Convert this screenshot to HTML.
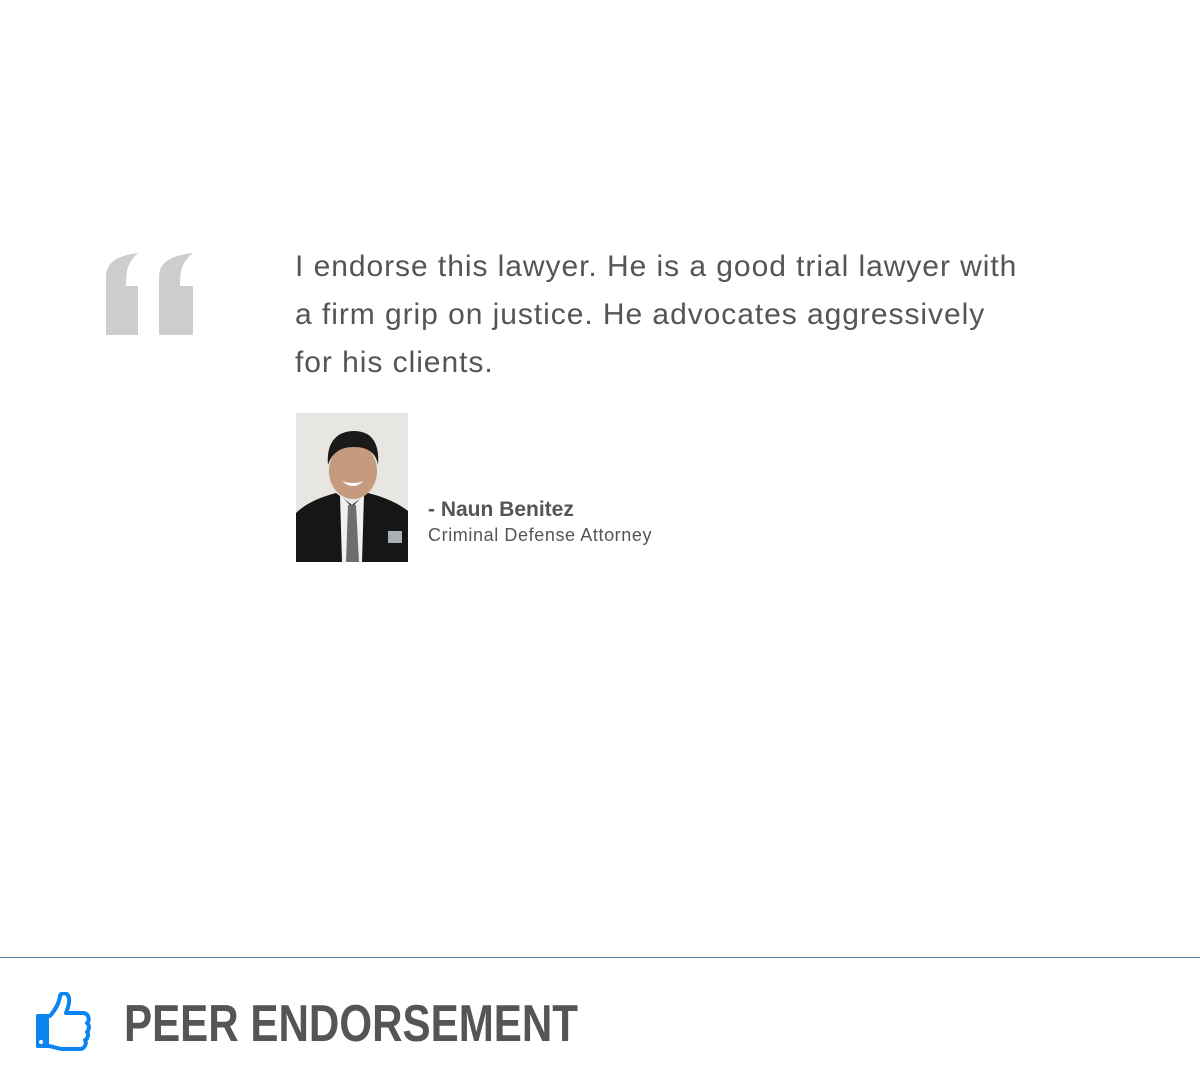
<!DOCTYPE html>
<html><head><style>
body{margin:0;width:1200px;height:1082px;background:#fff;position:relative;overflow:hidden;font-family:"Liberation Sans",sans-serif;color:#555}
.q{position:absolute;left:295px;top:243px;font-size:30px;line-height:48px;width:800px;letter-spacing:0.95px;white-space:nowrap}
.name{position:absolute;left:428px;top:498px;font-size:21px;font-weight:bold;color:#555}
.title{position:absolute;left:428px;top:525px;font-size:18px;color:#555;letter-spacing:0.6px}
.line{position:absolute;left:0;top:957px;width:1200px;height:1px;background:#5a7fa8}
.h{position:absolute;left:124px;top:996px;font-size:52px;font-weight:bold;color:#555;line-height:56px;transform:scaleX(0.81);transform-origin:left;white-space:nowrap}
</style></head><body>
<svg style="position:absolute;left:100px;top:248px" width="100" height="92" viewBox="0 0 100 92">
<path d="M6 87 V30 C6 16 14 8 38 5 C28 14 26 22 26 38 H38 V87 Z" fill="#cdcdcd"/>
<path d="M59 87 V30 C59 16 67 8 93 5 C82 14 80 22 80 38 H93 V87 Z" fill="#cdcdcd"/>
</svg>
<div class="q">I endorse this lawyer. He is a good trial lawyer with<br>a firm grip on justice. He advocates aggressively<br>for his clients.</div>
<svg style="position:absolute;left:296px;top:413px" width="112" height="149" viewBox="0 0 112 149">
<rect width="112" height="149" fill="#e8e6e2"/>
<path d="M0 149 V100 C10 90 25 84 40 80 L56 92 L72 80 C88 84 102 90 112 98 V149Z" fill="#161616"/>
<path d="M44 82 L56 94 L68 82 L66 149 H46Z" fill="#f0f0f0"/>
<path d="M52 92 H60 L63 149 H50Z" fill="#6a6e72"/>
<ellipse cx="57" cy="58" rx="24" ry="28" fill="#c59a7e"/>
<path d="M32 52 C30 28 42 18 58 18 C74 18 84 28 82 52 C80 40 72 34 58 34 C44 34 36 40 32 52Z" fill="#1a1a1a"/>
<path d="M46 68 Q57 78 68 68 Q57 72 46 68Z" fill="#fff"/>
<rect x="92" y="118" width="14" height="12" fill="#a8b0b4"/>
</svg>
<div class="name">- Naun Benitez</div>
<div class="title">Criminal Defense Attorney</div>
<div class="line"></div>
<svg style="position:absolute;left:33px;top:992px" width="60" height="62" viewBox="0 0 60 62">
<path d="M5 24 H17 C22 18 26 12 27 4 C28 0 35 0 36 6 C37 12 34 18 33 21 H51 C56 22 57 29 54 31 C57 33 56 38 54 40 C56 42 55 47 52 48 C54 51 52 56 48 57 H30 C24 57 20 54 15 54 H5 Z" fill="#fff" stroke="#0a84f0" stroke-width="4" stroke-linejoin="round"/>
<rect x="3" y="22" width="13" height="34" rx="2" fill="#0a84f0"/>
<circle cx="8" cy="50" r="2" fill="#fff"/>
</svg>
<div class="h">PEER ENDORSEMENT</div>
</body></html>
